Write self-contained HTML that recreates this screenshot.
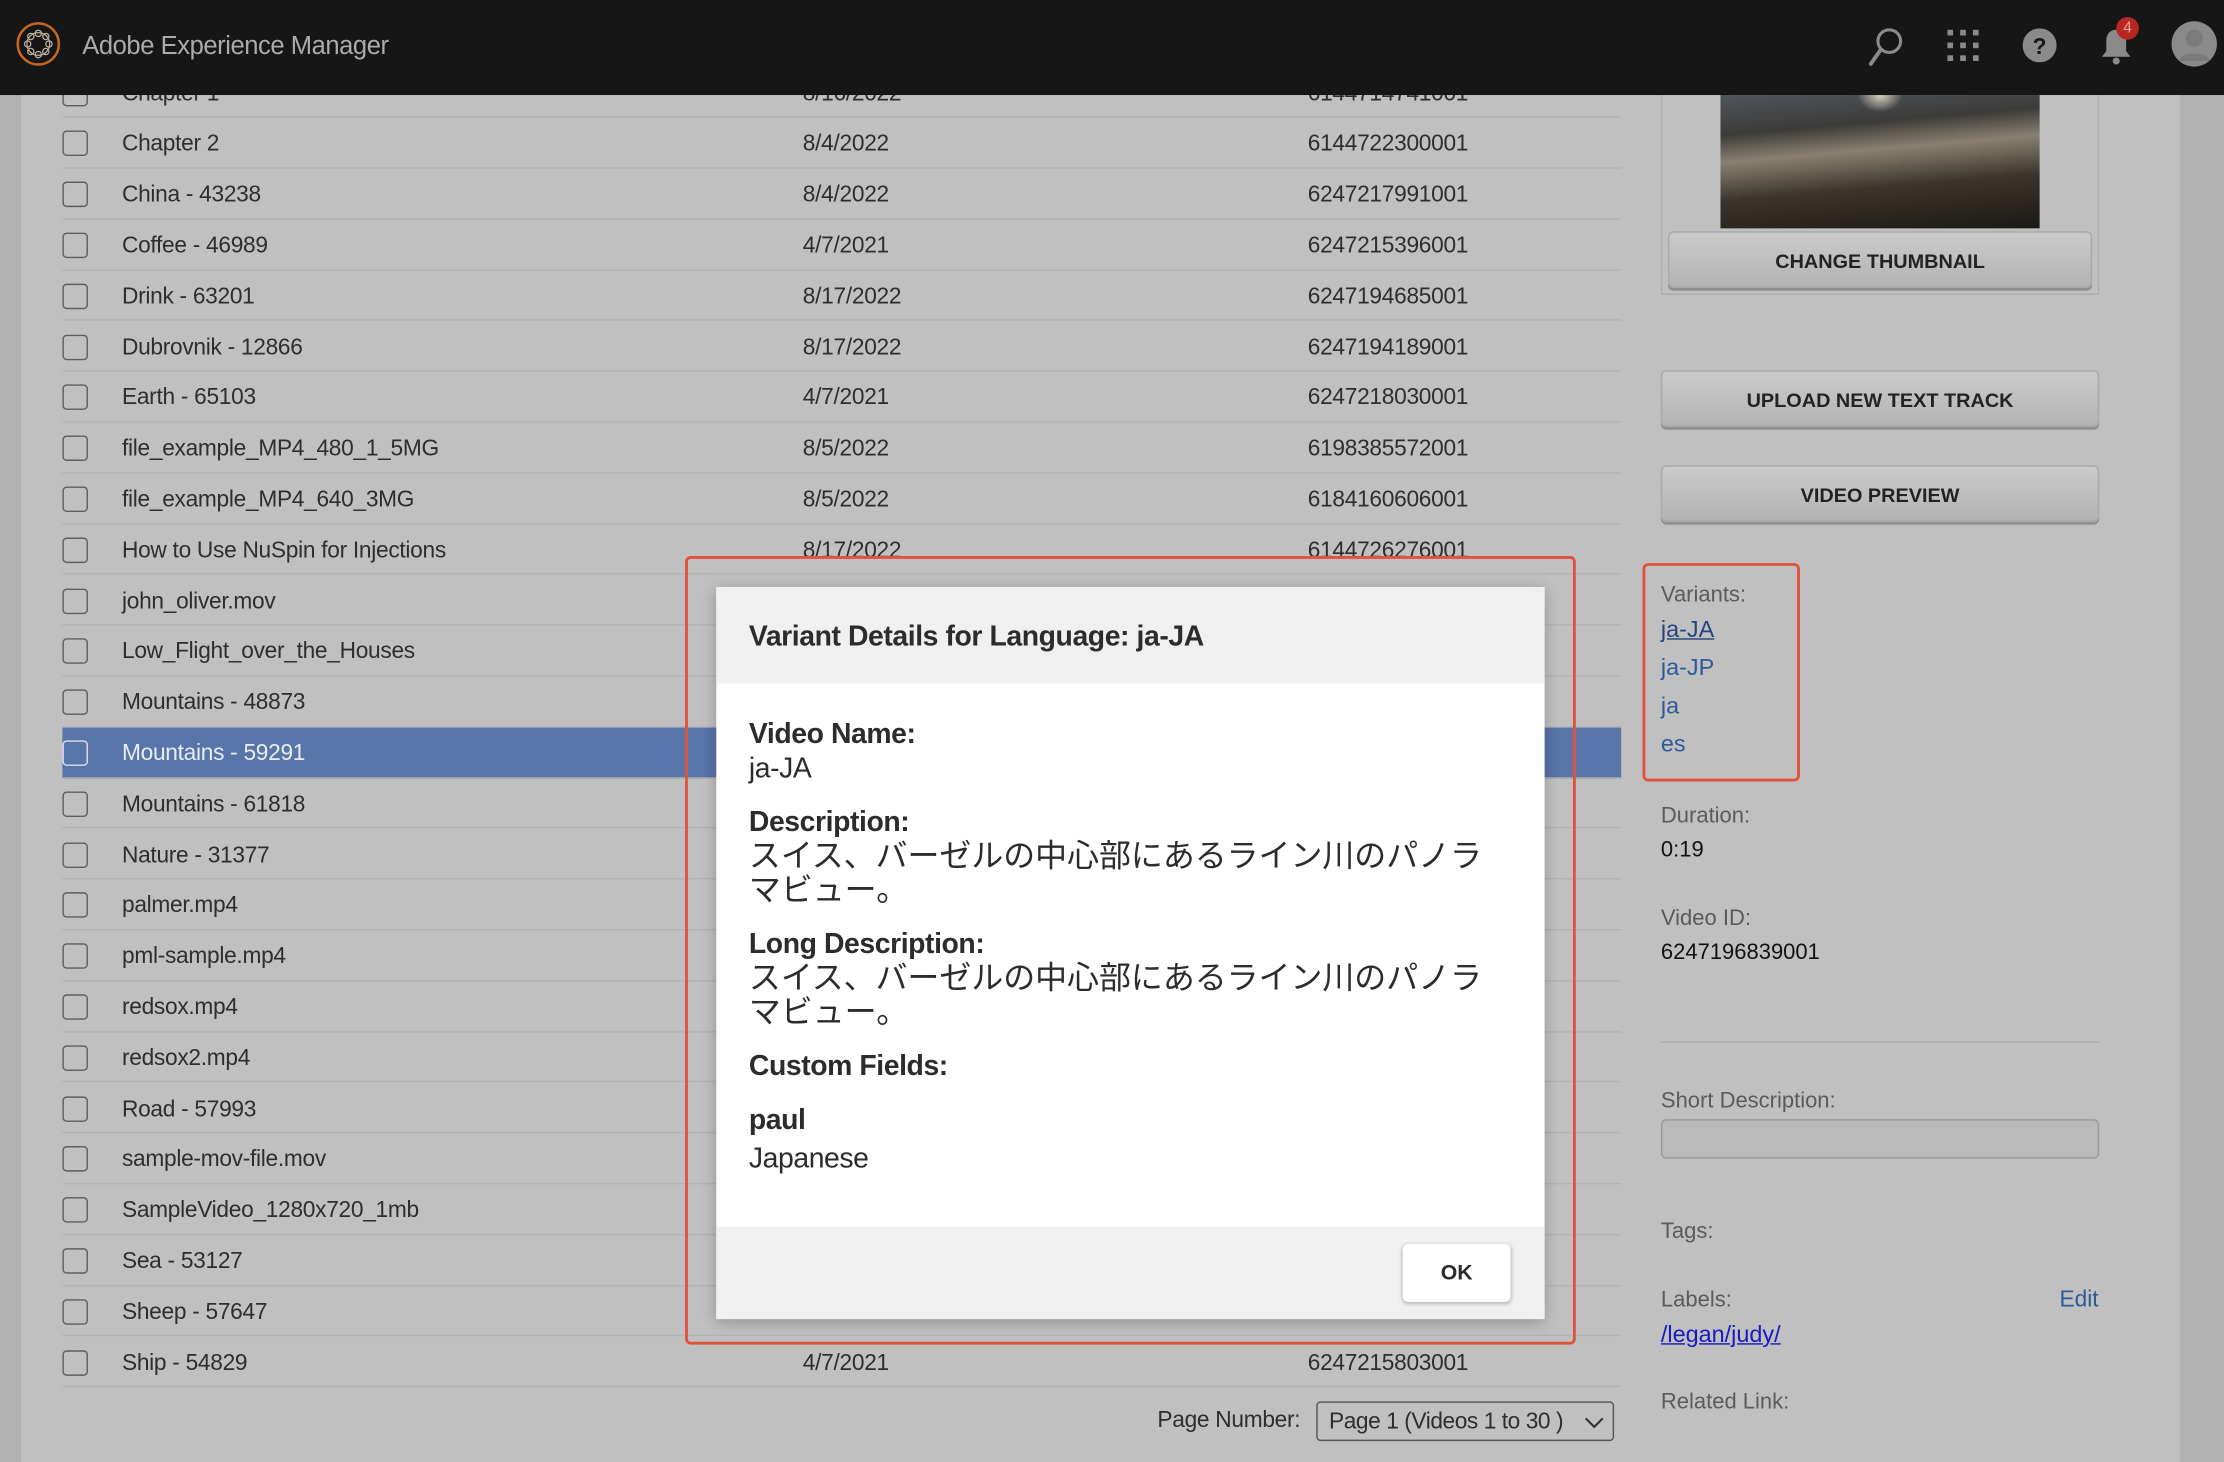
<!DOCTYPE html>
<html><head><meta charset="utf-8">
<style>
*{box-sizing:border-box;margin:0;padding:0}
html,body{width:2224px;height:1462px;overflow:hidden;background:#b3b3b3}
#w{position:absolute;left:0;top:0;width:1568px;height:1031px;transform:scale(1.41837);transform-origin:0 0;font-family:"Liberation Sans","Noto Sans CJK JP",sans-serif;color:#2e2e2e;background:#b1b1b1}
.a{position:absolute}
#panel{left:15px;top:0;width:1522px;height:1031px;background:#c0c0c0}
.row{position:absolute;left:44px;width:1099px;height:35.8px;border-bottom:1.5px solid #b3b3b3;font-size:16px;line-height:38px;letter-spacing:-0.2px}
.row .cb{position:absolute;left:0;top:9px;width:18px;height:18px;border:1.5px solid #5e5e5e;border-radius:3px}
.row .n{position:absolute;left:42px;top:0}
.row .d{position:absolute;left:522px;top:0}
.row .i{position:absolute;left:878px;top:0}
.row.sel{background:#5775a8;color:#e8ecf3}
.row.sel .cb{border-color:#dbe1ec}
#hdr{left:0;top:0;width:1568px;height:67px;background:#161616}
.btn{position:absolute;border:1px solid #a9a9a9;border-radius:4px;background:linear-gradient(#cbcbcb,#b3b3b3);box-shadow:0 2px 0 #8f8f8f;font-weight:bold;font-size:14px;text-align:center;color:#232323}
.lbl{position:absolute;left:1171px;font-size:15.5px;color:#5b5b5b;line-height:22px}
.val{position:absolute;left:1171px;font-size:15.5px;color:#111;line-height:22px}
.lnk{position:absolute;left:1171px;font-size:16.5px;color:#2d5a9a;line-height:22px}
#modal{left:505px;top:414px;width:584px;height:516px;background:#fff;box-shadow:0 2px 10px rgba(0,0,0,.25)}
.mh{font-weight:bold;font-size:20px;color:#2c2c2c;position:absolute;left:23px;line-height:26px;letter-spacing:-0.3px}
.mt{font-size:20px;color:#2c2c2c;position:absolute;left:23px;line-height:26px;letter-spacing:-0.3px}
.jp{font-size:22.5px;line-height:24px;letter-spacing:0;width:530px}
</style></head><body>
<div id="w">
<div class="a" id="panel"></div>

<div class="row" style="top:47.5px"><div class="cb"></div><div class="n">Chapter 1</div><div class="d">8/16/2022</div><div class="i">6144714741001</div></div>
<div class="row" style="top:83.3px"><div class="cb"></div><div class="n">Chapter 2</div><div class="d">8/4/2022</div><div class="i">6144722300001</div></div>
<div class="row" style="top:119.1px"><div class="cb"></div><div class="n">China - 43238</div><div class="d">8/4/2022</div><div class="i">6247217991001</div></div>
<div class="row" style="top:154.9px"><div class="cb"></div><div class="n">Coffee - 46989</div><div class="d">4/7/2021</div><div class="i">6247215396001</div></div>
<div class="row" style="top:190.7px"><div class="cb"></div><div class="n">Drink - 63201</div><div class="d">8/17/2022</div><div class="i">6247194685001</div></div>
<div class="row" style="top:226.5px"><div class="cb"></div><div class="n">Dubrovnik - 12866</div><div class="d">8/17/2022</div><div class="i">6247194189001</div></div>
<div class="row" style="top:262.3px"><div class="cb"></div><div class="n">Earth - 65103</div><div class="d">4/7/2021</div><div class="i">6247218030001</div></div>
<div class="row" style="top:298.1px"><div class="cb"></div><div class="n">file_example_MP4_480_1_5MG</div><div class="d">8/5/2022</div><div class="i">6198385572001</div></div>
<div class="row" style="top:333.9px"><div class="cb"></div><div class="n">file_example_MP4_640_3MG</div><div class="d">8/5/2022</div><div class="i">6184160606001</div></div>
<div class="row" style="top:369.7px"><div class="cb"></div><div class="n">How to Use NuSpin for Injections</div><div class="d">8/17/2022</div><div class="i">6144726276001</div></div>
<div class="row" style="top:405.5px"><div class="cb"></div><div class="n">john_oliver.mov</div><div class="d">8/5/2022</div><div class="i">6184160000001</div></div>
<div class="row" style="top:441.3px"><div class="cb"></div><div class="n">Low_Flight_over_the_Houses</div><div class="d">8/5/2022</div><div class="i">6184160000001</div></div>
<div class="row" style="top:477.1px"><div class="cb"></div><div class="n">Mountains - 48873</div><div class="d">4/7/2021</div><div class="i">6247210000001</div></div>
<div class="row sel" style="top:512.9px"><div class="cb"></div><div class="n">Mountains - 59291</div><div class="d">4/7/2021</div><div class="i">6247196839001</div></div>
<div class="row" style="top:548.7px"><div class="cb"></div><div class="n">Mountains - 61818</div><div class="d">4/7/2021</div><div class="i">6247210000001</div></div>
<div class="row" style="top:584.5px"><div class="cb"></div><div class="n">Nature - 31377</div><div class="d">4/7/2021</div><div class="i">6247210000001</div></div>
<div class="row" style="top:620.3px"><div class="cb"></div><div class="n">palmer.mp4</div><div class="d">8/5/2022</div><div class="i">6184160000003</div></div>
<div class="row" style="top:656.1px"><div class="cb"></div><div class="n">pml-sample.mp4</div><div class="d">8/5/2022</div><div class="i">6184160000001</div></div>
<div class="row" style="top:691.9px"><div class="cb"></div><div class="n">redsox.mp4</div><div class="d">8/5/2022</div><div class="i">6184160000001</div></div>
<div class="row" style="top:727.7px"><div class="cb"></div><div class="n">redsox2.mp4</div><div class="d">8/5/2022</div><div class="i">6184160000001</div></div>
<div class="row" style="top:763.5px"><div class="cb"></div><div class="n">Road - 57993</div><div class="d">4/7/2021</div><div class="i">6247210000001</div></div>
<div class="row" style="top:799.3px"><div class="cb"></div><div class="n">sample-mov-file.mov</div><div class="d">8/5/2022</div><div class="i">6184160000001</div></div>
<div class="row" style="top:835.1px"><div class="cb"></div><div class="n">SampleVideo_1280x720_1mb</div><div class="d">8/5/2022</div><div class="i">6184160000001</div></div>
<div class="row" style="top:870.9px"><div class="cb"></div><div class="n">Sea - 53127</div><div class="d">4/7/2021</div><div class="i">6247210000001</div></div>
<div class="row" style="top:906.7px"><div class="cb"></div><div class="n">Sheep - 57647</div><div class="d">4/7/2021</div><div class="i">6247195540001</div></div>
<div class="row" style="top:942.5px"><div class="cb"></div><div class="n">Ship - 54829</div><div class="d">4/7/2021</div><div class="i">6247215803001</div></div>

<div class="a" style="left:816px;top:991px;font-size:16px;line-height:22px;letter-spacing:-0.2px">Page Number:</div>
<div class="a" style="left:928px;top:988px;width:210px;height:28px;border:1.3px solid #555;border-radius:3px;font-size:16px;line-height:27px;padding-left:8px;letter-spacing:-0.3px">Page 1 (Videos 1 to 30 )
<svg class="a" style="right:6px;top:9px" width="14" height="10" viewBox="0 0 14 10"><path d="M1 2l6 6 6-6" fill="none" stroke="#333" stroke-width="1.5"/></svg></div>

<!-- right panel -->
<div class="a" style="left:1171px;top:40px;width:309px;height:168px;border:1.3px solid #adadad"></div>
<div class="a" style="left:1213px;top:67px;width:225px;height:94px;background:radial-gradient(ellipse 16px 12px at 50% 0%,#d8d2c0,rgba(0,0,0,0) 100%),linear-gradient(175deg,#50555c 0%,#3c3b39 25%,#8a8070 42%,#6a6253 52%,#3a352d 66%,#2c271f 82%,#1b1a18 100%)"></div>
<div class="btn" style="left:1176px;top:163px;width:299px;height:40px;line-height:40px">CHANGE THUMBNAIL</div>
<div class="btn" style="left:1171px;top:261px;width:309px;height:40px;line-height:40px">UPLOAD NEW TEXT TRACK</div>
<div class="btn" style="left:1171px;top:328px;width:309px;height:40px;line-height:40px">VIDEO PREVIEW</div>

<div class="a" style="left:1158px;top:397px;width:111px;height:154px;border:2.3px solid #e0533a;border-radius:4px"></div>
<div class="lbl" style="top:409px">Variants:</div>
<div class="lnk" style="top:433px;text-decoration:underline;color:#27447a">ja-JA</div>
<div class="lnk" style="top:460px">ja-JP</div>
<div class="lnk" style="top:487px">ja</div>
<div class="lnk" style="top:514px">es</div>
<div class="lbl" style="top:565px">Duration:</div>
<div class="val" style="top:589px">0:19</div>
<div class="lbl" style="top:637px">Video ID:</div>
<div class="val" style="top:661px">6247196839001</div>
<div class="a" style="left:1171px;top:734px;width:309px;height:1px;background:#adadad"></div>
<div class="lbl" style="top:766px">Short Description:</div>
<div class="a" style="left:1171px;top:789px;width:309px;height:28px;border:1.3px solid #999;border-radius:4px;background:#b9b9b9"></div>
<div class="lbl" style="top:858px">Tags:</div>
<div class="lbl" style="top:906px">Labels:</div>
<div class="a" style="left:1452px;top:906px;font-size:16px;color:#2d5a9a;line-height:22px">Edit</div>
<div class="lnk" style="top:930px;color:#1a1ac0;text-decoration:underline">/legan/judy/</div>
<div class="lbl" style="top:978px">Related Link:</div>

<!-- header -->
<div class="a" id="hdr">
<svg class="a" style="left:10px;top:14px" width="34" height="34" viewBox="0 0 34 34"><circle cx="17" cy="17" r="14.5" fill="none" stroke="#c6661f" stroke-width="1.8"/><g fill="none" stroke="#b9ad9c" stroke-width="0.9"><circle cx="17" cy="17" r="8"/><circle cx="17" cy="9.5" r="2.2"/><circle cx="17" cy="24.5" r="2.2"/><circle cx="9.5" cy="17" r="2.2"/><circle cx="24.5" cy="17" r="2.2"/><circle cx="11.7" cy="11.7" r="2.2"/><circle cx="22.3" cy="11.7" r="2.2"/><circle cx="11.7" cy="22.3" r="2.2"/><circle cx="22.3" cy="22.3" r="2.2"/></g></svg>
<div class="a" style="left:58px;top:20px;font-size:18px;color:#ababab;line-height:24px;letter-spacing:-0.3px">Adobe Experience Manager</div>
<svg class="a" style="left:1316px;top:18px" width="28" height="30" viewBox="0 0 28 30"><circle cx="16" cy="11" r="8" fill="none" stroke="#8a8a8a" stroke-width="2.2"/><path d="M10 17L3 27" stroke="#8a8a8a" stroke-width="2.8" stroke-linecap="round"/></svg>
<svg class="a" style="left:1372px;top:20px" width="24" height="24" viewBox="0 0 24 24" fill="#8a8a8a"><rect x="1" y="1" width="4" height="4"/><rect x="10" y="1" width="4" height="4"/><rect x="19" y="1" width="4" height="4"/><rect x="1" y="10" width="4" height="4"/><rect x="10" y="10" width="4" height="4"/><rect x="19" y="10" width="4" height="4"/><rect x="1" y="19" width="4" height="4"/><rect x="10" y="19" width="4" height="4"/><rect x="19" y="19" width="4" height="4"/></svg>
<svg class="a" style="left:1426px;top:20px" width="24" height="24" viewBox="0 0 24 24"><circle cx="12" cy="12" r="12" fill="#8a8a8a"/><text x="12" y="18" text-anchor="middle" font-family="Liberation Sans" font-weight="bold" font-size="16" fill="#161616">?</text></svg>
<svg class="a" style="left:1480px;top:18px" width="24" height="30" viewBox="0 0 24 30"><path d="M12 3c-5 0-7 4-7 8v7l-3 4h20l-3-4v-7c0-4-2-8-7-8z" fill="#8a8a8a"/><circle cx="12" cy="25" r="2.5" fill="#8a8a8a"/></svg>
<div class="a" style="left:1492px;top:12px;width:16px;height:16px;border-radius:8px;background:#b8261f;color:#e6a6a0;font-size:11px;line-height:16px;text-align:center">4</div>
<svg class="a" style="left:1530px;top:14px" width="34" height="34" viewBox="0 0 34 34"><circle cx="17" cy="17" r="16" fill="#8a8a8a"/><circle cx="17" cy="13" r="6" fill="#7a7a7a"/><path d="M6 29c2-7 20-7 22 0" fill="#7a7a7a"/></svg>
</div>

<!-- modal -->
<div class="a" style="left:483px;top:392px;width:628px;height:556px;border:2.3px solid #e0533a;border-radius:4px"></div>
<div class="a" id="modal">
<div class="a" style="left:0;top:0;width:584px;height:68px;background:#f0f0f0"></div>
<div class="mh" style="top:22px">Variant Details for Language: ja-JA</div>
<div class="mh" style="top:91px">Video Name:</div>
<div class="mt" style="top:115px">ja-JA</div>
<div class="mh" style="top:153px">Description:</div>
<div class="mt jp" style="top:178px">スイス、バーゼルの中心部にあるライン川のパノラマビュー。</div>
<div class="mh" style="top:239px">Long Description:</div>
<div class="mt jp" style="top:264px">スイス、バーゼルの中心部にあるライン川のパノラマビュー。</div>
<div class="mh" style="top:325px">Custom Fields:</div>
<div class="mh" style="top:363px">paul</div>
<div class="mt" style="top:390px">Japanese</div>
<div class="a" style="left:0;top:451px;width:584px;height:65px;background:#f0f0f0"></div>
<div class="a" style="left:484px;top:463px;width:76px;height:41px;background:#fff;border-radius:4px;box-shadow:0 1px 3px rgba(0,0,0,.3);font-weight:bold;font-size:15px;line-height:41px;text-align:center;color:#2c2c2c">OK</div>
</div>
</div>
</body></html>
